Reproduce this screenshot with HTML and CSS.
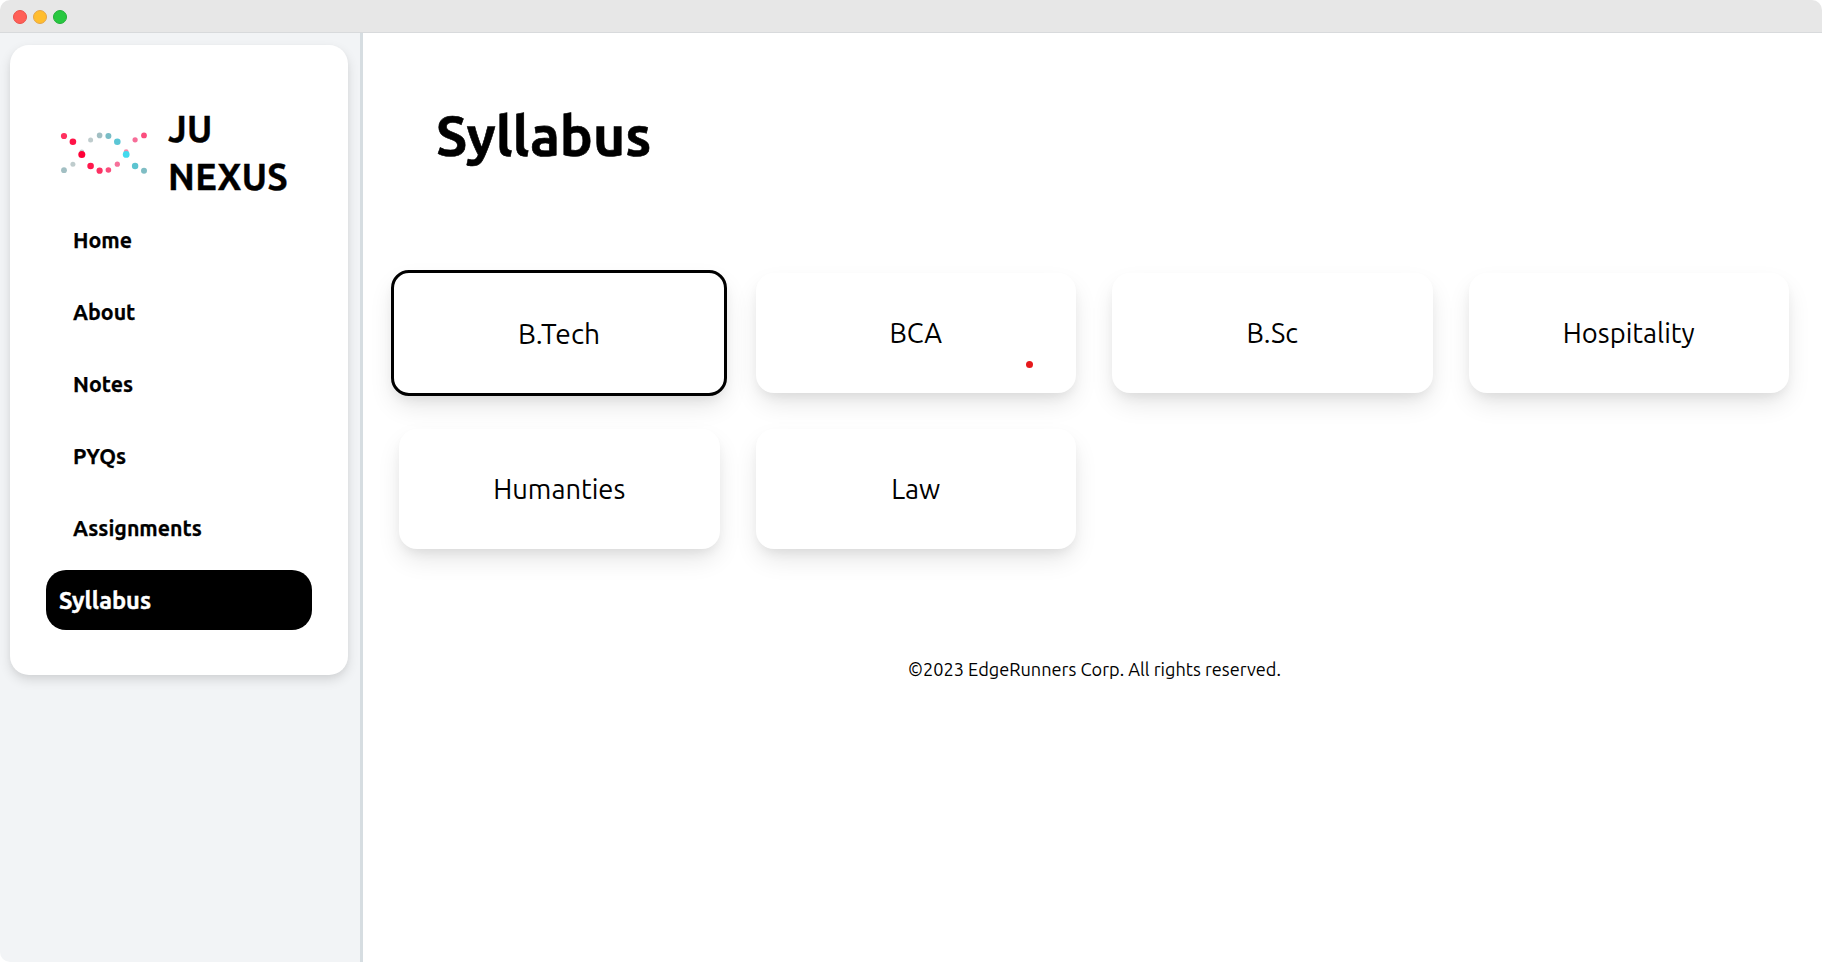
FILE: index.html
```html
<!DOCTYPE html>
<html lang="en">
<head>
<meta charset="utf-8">
<title>JU Nexus</title>
<link rel="stylesheet" href="styles.css">
</head>
<body>
<div class="window">
<header class="titlebar"><span class="light red"></span><span class="light amber"></span><span class="light green"></span></header>
<div class="content">
<aside class="sidebar"><div class="panel">
<div class="brand">
<svg class="logo" width="90" height="44" viewBox="0 0 90 44">
<g fill="#a2bfc3"><circle cx="4" cy="38.2" r="2.9"/><circle cx="39.6" cy="3.4" r="2.8"/></g>
<g fill="#bfcccd"><circle cx="12.9" cy="32.2" r="2.5"/><circle cx="30.6" cy="8" r="2.5"/><circle cx="21.8" cy="20" r="2.4"/></g>
<circle cx="48.4" cy="4" r="3" fill="#79bdc6"/><circle cx="57.3" cy="9.8" r="3.3" fill="#5bc6d5"/>
<circle cx="75.1" cy="34" r="3.2" fill="#5cc4d0"/><circle cx="84" cy="38.7" r="3" fill="#7fbdc4"/>
<circle cx="4" cy="4" r="3.1" fill="#ff315f"/><circle cx="12.9" cy="9.8" r="3.3" fill="#ff1347"/><circle cx="21.8" cy="22.5" r="3.5" fill="#ff0037"/>
<circle cx="30.6" cy="34" r="3.3" fill="#ff174c"/><circle cx="39.6" cy="38.7" r="3.1" fill="#fc3163"/><circle cx="48.4" cy="38" r="2.8" fill="#fb4b7b"/>
<circle cx="57.3" cy="32.2" r="2.6" fill="#f6709a"/><circle cx="66.2" cy="19.7" r="2.4" fill="#f28bab"/><circle cx="75.1" cy="7.8" r="2.6" fill="#f76d98"/><circle cx="84" cy="3.4" r="2.9" fill="#fb4e7e"/>
<circle cx="66.2" cy="22.4" r="3.4" fill="#44daee"/>
</svg>
<div class="name">JU<br>NEXUS</div>
</div>
<nav class="nav">
<a>Home</a>
<a>About</a>
<a>Notes</a>
<a>PYQs</a>
<a>Assignments</a>
<a class="active">Syllabus</a>
</nav>
</div></aside>
<main class="main">
<h1>Syllabus</h1>
<div class="grid">
<div class="card selected">B.Tech</div>
<div class="card">BCA<i class="pointer"></i></div>
<div class="card">B.Sc</div>
<div class="card">Hospitality</div>
<div class="card">Humanties</div>
<div class="card">Law</div>
</div>
<footer>©2023 EdgeRunners Corp. All rights reserved.</footer>
</main>
</div>
</div>
</body>
</html>
```
FILE: styles.css
```css
*{box-sizing:border-box}
body{margin:0;background:#fff;color:#000;font-family:Ubuntu,"Noto Sans",sans-serif}
.window{height:962px;display:flex;flex-direction:column;border-radius:10px;overflow:hidden}
.titlebar{height:33px;flex:none;background:#e7e7e7;border-bottom:1px solid #d8dadc;display:flex;align-items:center;gap:6px;padding:1px 0 0 13px}
.light{width:14px;height:14px;border-radius:50%;border:1px solid}
.red{background:#ff5f57;border-color:#e9504a}
.amber{background:#ffbd2e;border-color:#e3a549}
.green{background:#28c840;border-color:#22ae38}
.content{flex:1;display:flex;min-height:0}
.sidebar{width:363px;flex:none;background:#f2f4f6;border-right:3px solid #d6dde1;padding:12px 12px 0 10px}
.panel{height:630px;background:#fff;border-radius:19px;padding:60px 36px 0;box-shadow:0 5px 12px rgba(0,0,0,.12),0 2px 5px rgba(0,0,0,.03)}
.brand{display:flex;align-items:center;gap:18px;padding-left:14px;height:96px}
.logo{margin-top:2px}
.name{font-size:36px;line-height:48px;font-weight:600;letter-spacing:.35px;-webkit-text-stroke:.4px #000}
.nav{display:flex;flex-direction:column;gap:12px;margin-top:9px}
.nav a{height:60px;display:flex;align-items:center;padding-left:27px;font-size:21.35px;font-weight:600;-webkit-text-stroke:.25px}
.nav .active{padding-left:13px;background:#000;color:#fff;border-radius:20px;font-weight:700;font-size:23.6px;-webkit-text-stroke:.4px}
.main{flex:1;min-width:0}
h1{margin:65px 0 0 73px;font-size:55.2px;line-height:76px;height:175px;font-weight:700;-webkit-text-stroke:.6px #000}
.grid{display:grid;grid-template-columns:repeat(4,1fr);gap:36px;padding:0 33px 0 36px}
.card{height:120px;border-radius:18px;background:#fff;box-shadow:0 12px 26px -3px rgba(0,0,0,.11),0 6px 12px -3px rgba(0,0,0,.07);display:flex;align-items:center;justify-content:center;font-size:27.3px;position:relative}
.selected{margin:-3px -7.5px -3px -8px;height:126px;border:3px solid #000;font-size:28.2px}
.pointer{position:absolute;width:7px;height:7px;border-radius:50%;background:#e6191c;right:43.5px;bottom:25px}
footer{margin-top:107px;padding-left:4px;text-align:center;font-size:18.15px;line-height:26px}
```
